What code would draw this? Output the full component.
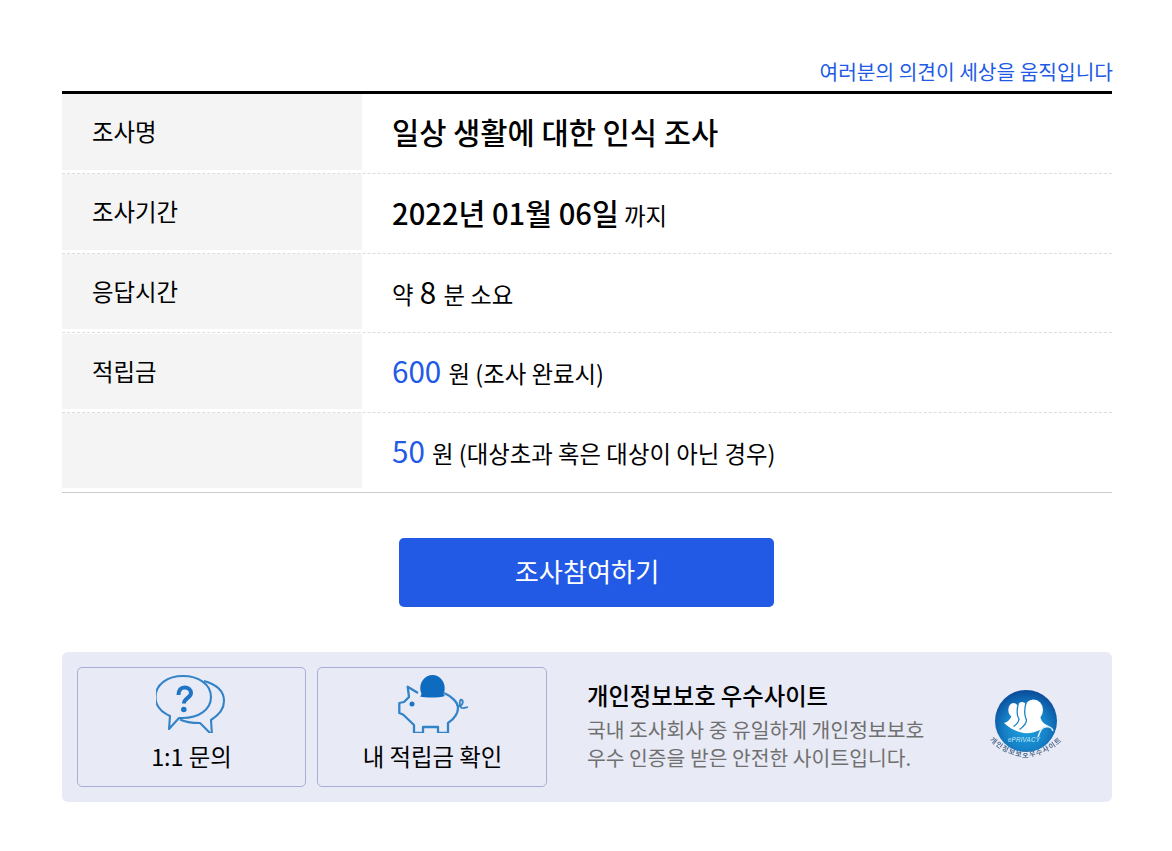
<script lang="ts">
  const rows = [
    { label: "조사명" },
    { label: "조사기간" },
    { label: "응답시간" },
    { label: "적립금" },
    { label: "" },
  ];
</script>

<div class="page">
  <p class="slogan">여러분의 의견이 세상을 움직입니다</p>

  <div class="info">
    <div class="row">
      <div class="label"><span>{rows[0].label}</span></div>
      <div class="value title">일상 생활에 대한 인식 조사</div>
    </div>
    <div class="row">
      <div class="label"><span>{rows[1].label}</span></div>
      <div class="value"><strong class="date">2022년 01월 06일</strong> 까지</div>
    </div>
    <div class="row">
      <div class="label"><span>{rows[2].label}</span></div>
      <div class="value">약 <b class="num dark">8</b> 분 소요</div>
    </div>
    <div class="row">
      <div class="label"><span>{rows[3].label}</span></div>
      <div class="value"><b class="num blue">600</b> 원 (조사 완료시)</div>
    </div>
    <div class="row last">
      <div class="label"><span>{rows[4].label}</span></div>
      <div class="value"><b class="num blue">50</b> 원 (대상초과 혹은 대상이 아닌 경우)</div>
    </div>
  </div>

  <div class="action">
    <button class="join">조사참여하기</button>
  </div>

  <div class="footer">
    <a class="card" href="#inquiry">
      <svg class="card-icon" width="72" height="60" viewBox="16 8 72 60" fill="none" stroke="#3383c9" stroke-width="2.100" stroke-linejoin="round">
        <path d="M43 11C58 11 71 19 71 32C71 45 58 53 43 53C41 53 40 53 39 53L29 64L30 51C21 47 15.500 40 15.500 32C15.500 19 28 11 43 11Z" />
        <path d="M64 16C75 19 84 25 84 36C84 44 79 50 71 55L72 70L60 58C54 58 47 58 40 54.500" />
        <path d="M38.500 30C38.500 25 41 22.500 44.500 22.500C48.500 22.500 51 24.500 51 28C51 33 44 33 44 38.500" stroke="#1f75c4" stroke-width="4" />
        <circle cx="43.800" cy="44.500" r="2.800" fill="#1f75c4" stroke="none" />
      </svg>
      <span>1:1 문의</span>
    </a>
    <a class="card" href="#point">
      <svg class="card-icon" width="72" height="60" viewBox="11 8 72 60" fill="none" stroke="#3383c9" stroke-width="2.300" stroke-linejoin="round">
        <path d="M34 31.500C36 30 35.500 28 34.500 26C33 17 39 10 46.500 10C54 10 60 17 58.500 26C57.500 28 57 30 59 31C53 33 40 33 34 31.500Z" fill="#0f6bc0" stroke="none" />
        <path d="M32 28L21.700 21.700L23 32L18 37L13.300 38V48L17 49.500L28 60V68H37V62H52V68H62V58C68 54 72 49 72 43C72 37 65 31 58 28" />
        <path d="M71 40C75 44 78 37 76 35C73 33 73 42 76 43C78 43.500 80 42.500 82 42" stroke-width="1.800" />
        <circle cx="26" cy="39" r="2.500" fill="#1f75c4" stroke="none" />
      </svg>
      <span>내 적립금 확인</span>
    </a>

    <div class="privacy">
      <strong>개인정보보호 우수사이트</strong>
      <p>국내 조사회사 중 유일하게 개인정보보호<br />우수 인증을 받은 안전한 사이트입니다.</p>
    </div>

    <svg class="seal" width="94" height="85" viewBox="0 0 94 85">
      <defs>
        <radialGradient id="sealFill" cx="50%" cy="62%" r="62%">
          <stop offset="0%" stop-color="#1fa3de" />
          <stop offset="55%" stop-color="#1682c8" />
          <stop offset="100%" stop-color="#0a4a98" />
        </radialGradient>
        <path id="sealArc" d="M8 54Q46 90 84 54" />
      </defs>
      <circle cx="46" cy="36" r="31" fill="url(#sealFill)" />
      <g fill="#fff">
        <ellipse cx="33.500" cy="25" rx="5.200" ry="7" />
        <ellipse cx="42" cy="24.500" rx="5.500" ry="7.500" />
        <ellipse cx="53.500" cy="25" rx="9.500" ry="10.500" />
        <path d="M24 38C28 37 31 34 32 29L60 29C60 36 64 39 69 41C63 43 58 47 50 48C40 49 30 44 24 38Z" />
      </g>
      <g fill="none" stroke="#1682c8" stroke-width="1.300">
        <path d="M38.500 18C36.500 25 37 31 39 34C38.500 38 36 40 33.500 41.500" />
        <path d="M46.500 16C44 24 44.500 31 46.500 35C46.500 39 43 42 39.500 44.500" />
      </g>
      <path d="M58 52C60 46 62 42 65 42C68 41 72 42 73 46" stroke="#dcedf8" stroke-width="1.600" fill="none" />
      <text class="seal-brand" x="44" y="57" text-anchor="middle">ePRIVACY</text>
      <text class="seal-text"><textPath href="#sealArc" startOffset="50%" text-anchor="middle">개인정보보호우수사이트</textPath></text>
    </svg>
  </div>
</div>

<style>
  :global(body) {
    margin: 0;
    background: #fff;
  }

  .page {
    width: 1050px;
    margin-left: 62px;
    padding-top: 57px;
    font-family: "Noto Sans CJK KR", "Noto Sans", sans-serif;
    color: #000;
  }

  .slogan {
    margin: 0 -1px 6px 0;
    height: 28px;
    line-height: 28px;
    text-align: right;
    font-size: 20.300px;
    color: #225ae6;
  }

  .info {
    border-top: 3px solid #000;
  }

  .row {
    display: flex;
    height: 79.800px;
    box-sizing: border-box;
    border-bottom: 1px dashed #ddd;
  }

  .row.last {
    border-bottom: 1px solid #ccc;
  }

  .label {
    width: 300px;
    flex-shrink: 0;
    height: 75.500px;
    margin-top: 0.400px;
    box-sizing: border-box;
    padding: 18px 0 0 30px;
    background: #f4f4f4;
    font-size: 23.400px;
    line-height: 38px;
  }

  .last .label {
    height: 75px;
    margin-top: 0;
  }

  .value {
    padding: 17px 0 0 30px;
    font-size: 23.400px;
    line-height: 42px;
  }

  .title {
    font-size: 29.600px;
    font-weight: 500;
  }

  .date {
    font-size: 29.200px;
    font-weight: 500;
  }

  .num {
    margin-right: 2px;
    font-size: 29.600px;
    font-weight: 400;
  }

  .dark {
    margin-left: 1px;
  }

  .blue {
    color: #225ae6;
  }

  .action {
    display: flex;
    justify-content: center;
    padding: 45px 2px 0 0;
  }

  .join {
    width: 375px;
    height: 69px;
    padding: 0 0 3px 2px;
    border: none;
    border-radius: 5px;
    background: #225ae6;
    color: #fff;
    font-family: inherit;
    font-size: 26.200px;
  }

  .footer {
    display: flex;
    align-items: center;
    box-sizing: border-box;
    height: 150px;
    margin-top: 45px;
    padding: 0 15px;
    border-radius: 6px;
    background: #e8eaf6;
  }

  .card {
    display: flex;
    flex-direction: column;
    align-items: center;
    box-sizing: border-box;
    width: 229px;
    height: 120px;
    padding-top: 5px;
    margin-right: 11px;
    border: 1px solid #a8aed8;
    border-radius: 5px;
    color: #000;
    font-size: 23.400px;
    line-height: 34px;
    text-decoration: none;
  }

  .card + .card {
    width: 230px;
    padding-left: 1px;
  }

  .card-icon {
    display: block;
    margin-bottom: 6px;
  }

  .privacy {
    margin: -4px 0 0 29px;
    width: 360px;
  }

  .privacy strong {
    display: block;
    font-size: 23.300px;
    font-weight: 500;
    line-height: 32px;
    margin-bottom: 4px;
  }

  .privacy p {
    margin: 0;
    font-size: 20.400px;
    line-height: 28px;
    color: #707070;
  }

  .seal {
    align-self: flex-start;
    margin: 33px 23px 0 auto;
    filter: blur(0.4px);
  }

  .seal-brand {
    font-family: "Liberation Sans", sans-serif;
    font-size: 6.500px;
    font-style: italic;
    font-weight: 700;
    fill: #8fd0f0;
  }

  .seal-text {
    font-size: 7px;
    font-weight: 700;
    letter-spacing: 1px;
    fill: #56708f;
  }
</style>
